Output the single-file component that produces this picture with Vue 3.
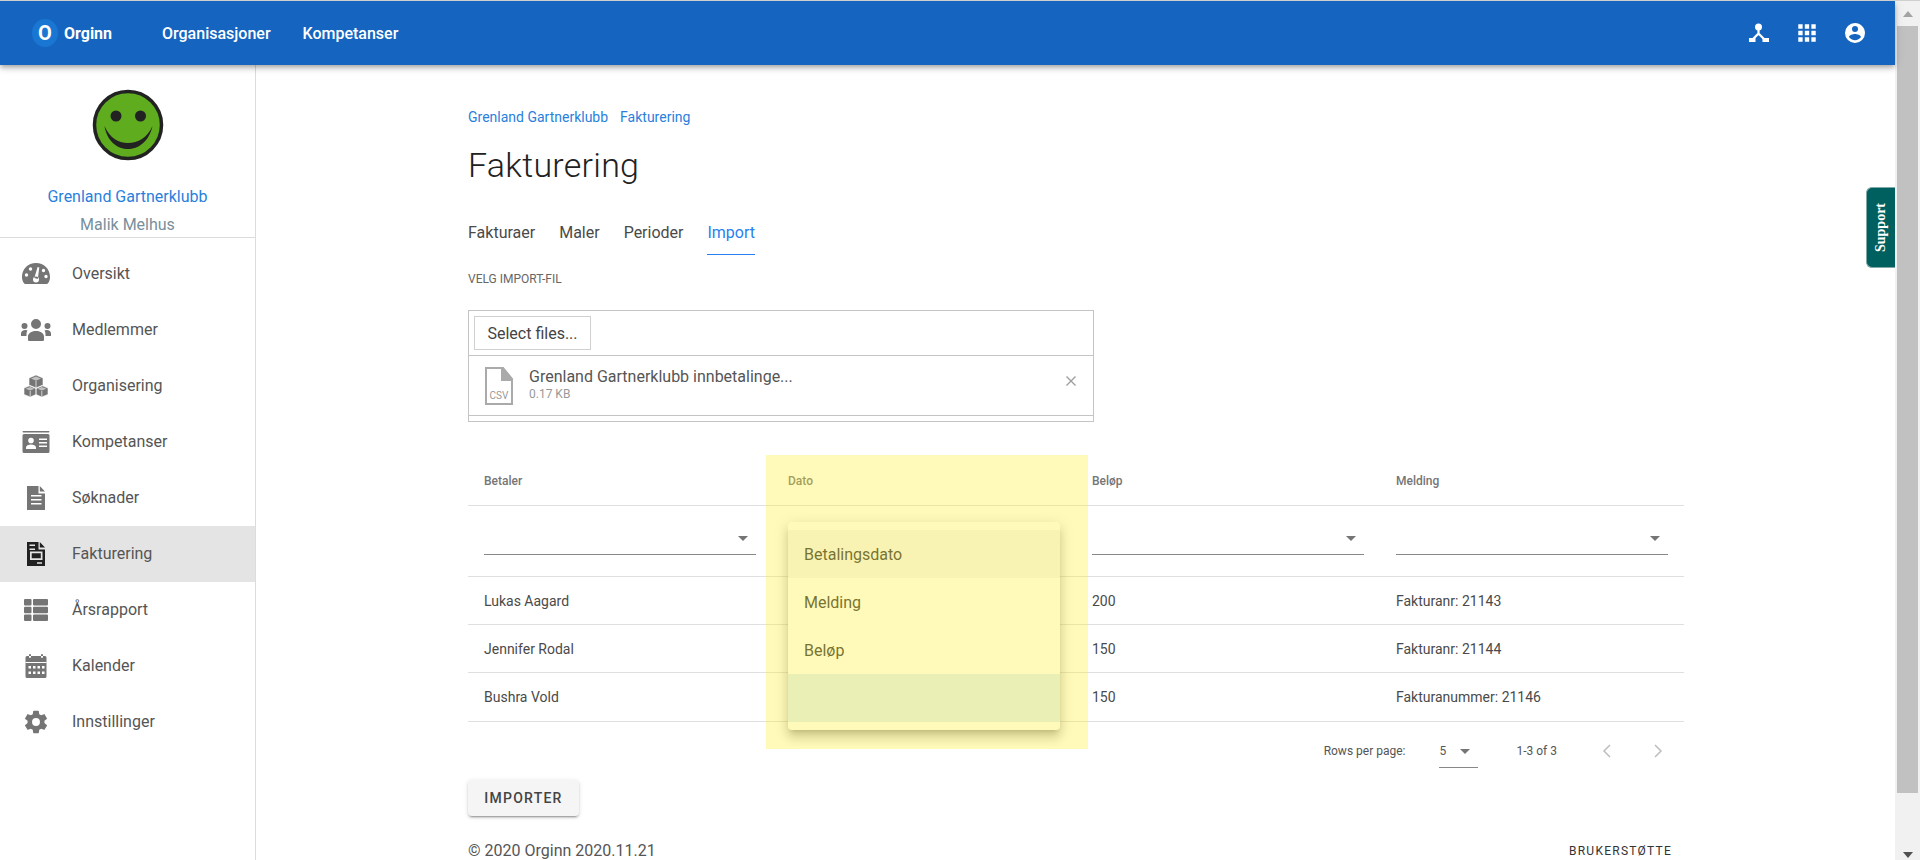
<script setup>
const circle = (cx, cy, r) => `M${cx - r} ${cy}a${r} ${r} 0 1 0 ${2 * r} 0a${r} ${r} 0 1 0 ${-2 * r} 0Z`
const rect = (x, y, w, h, r = 0) =>
  r
    ? `M${x + r} ${y}h${w - 2 * r}a${r} ${r} 0 0 1 ${r} ${r}v${h - 2 * r}a${r} ${r} 0 0 1 ${-r} ${r}h${-(w - 2 * r)}a${r} ${r} 0 0 1 ${-r} ${-r}v${-(h - 2 * r)}a${r} ${r} 0 0 1 ${r} ${-r}Z`
    : `M${x} ${y}h${w}v${h}h${-w}Z`

const navItems = [
  {
    label: 'Oversikt',
    shapes: [
      { k: 'f', d: 'M16 5C8 5 2 11 2 19c0 2 .5 4 1.5 5.5.5 1 1.5 1.5 2.5 1.5h20c1 0 2-.5 2.5-1.5 1-1.500 1.500-3.500 1.500-5.500C30 11 24 5 16 5Z' },
      { k: 'w', d: circle(16, 21.5, 3) + 'M14.3 20 17.600 9 19.300 9.500 17.800 21Z' + circle(10.500, 11, 1.700) + circle(6.500, 17, 1.700) + circle(23.500, 12.500, 1.700) + circle(26, 18.500, 1.700) },
    ],
  },
  {
    label: 'Medlemmer',
    shapes: [
      {
        k: 'f',
        d:
          circle(16, 10, 5) +
          circle(4.500, 12, 3) +
          circle(27.500, 12, 3) +
          'M8 25.500v-3C8 19.500 11 17 16 17s8 2.500 8 5.500v3c0 1-.6 1.500-1.500 1.500h-13C8.600 27 8 26.500 8 25.500Z' +
          'M1 22v-2.500C1 17.500 3 16 5 16c1 0 2 .3 2.500.5-.7 1-1 2.500-1 3.500v2Z' +
          'M31 22v-2.500c0-2-2-3.500-4-3.500-1 0-2 .3-2.500.5.7 1 1 2.500 1 3.500v2Z',
      },
    ],
  },
  {
    label: 'Organisering',
    shapes: [
      {
        k: 'c',
        d:
          'M16 5 23 8v7.500L16 18.500 9 15.500V8Z' +
          'M10.200 15.500 16 18v6.500L10.200 27 4 24.500V18Z' +
          'M21.800 15.500 28 18v6.500L21.800 27 16 24.500V18Z',
      },
      {
        k: 't',
        d:
          'M16 6.500 21 8.600 16 10.700 11 8.600Z' +
          'M10.200 17 14.500 18.800 10.200 20.600 5.500 18.800Z' +
          'M21.800 17 26.500 18.800 21.800 20.600 17.500 18.800Z',
      },
      { k: 'l', d: 'M16 11V17.500M10.200 21V26.500M21.800 21V26.500' },
    ],
  },
  {
    label: 'Kompetanser',
    shapes: [
      { k: 'f', d: rect(2.5, 5, 27, 1.6, 0.8) + rect(2.5, 8, 27, 19, 1.5) },
      {
        k: 'w',
        d:
          circle(11, 14.500, 2.800) +
          'M6 23v-1.500c0-2 2.500-3 5-3s5 1 5 3V23Z' +
          rect(19, 12.500, 8, 1.500) +
          rect(19, 16, 8, 1.500) +
          rect(19, 19.500, 8, 1.500),
      },
    ],
  },
  {
    label: 'Søknader',
    shapes: [
      { k: 'f', d: 'M7 4h11.500v7.500H25V28H7ZM19.800 4 25 9.500h-5.200Z' },
      { k: 'w', d: rect(11, 13, 10.500, 1.600) + rect(11, 17, 10.500, 1.600) + rect(11, 21, 10.500, 1.600) },
    ],
  },
  {
    label: 'Fakturering',
    active: true,
    shapes: [
      { k: 'f', d: 'M7 4h11.500v7.500H25V28H7ZM19.800 4 25 9.500h-5.200Z' },
      {
        k: 'w',
        d: rect(9.5, 6.5, 5.5, 1.5) + rect(9.5, 10.5, 5.5, 1.5) + rect(17, 24.200, 5, 1.500) + 'M10 13.500h12.500v8.500H10ZM11.700 15.200v5.100h9.100v-5.100Z',
      },
    ],
  },
  {
    label: 'Årsrapport',
    shapes: [
      {
        k: 'f',
        d:
          rect(4, 5, 7.5, 6.500, 1) +
          rect(13, 5, 15, 6.500, 1) +
          rect(4, 12.750, 7.5, 6.500, 1) +
          rect(13, 12.750, 15, 6.500, 1) +
          rect(4, 20.500, 7.5, 6.500, 1) +
          rect(13, 20.500, 15, 6.500, 1),
      },
    ],
  },
  {
    label: 'Kalender',
    shapes: [
      { k: 'f', d: rect(9, 4, 2, 4, 1) + rect(21, 4, 2, 4, 1) + rect(5.500, 6, 21, 22, 1.500) },
      {
        k: 'w',
        d:
          rect(5.5, 12, 21, 1) +
          [8.5, 13, 17.5, 22].map((x) => rect(x, 16, 2.500, 2.500) + rect(x, 21.500, 2.500, 2.500)).join(''),
      },
    ],
  },
  {
    label: 'Innstillinger',
    shapes: [
      {
        k: 'f',
        t: 'translate(2.44 2.44) scale(1.13)',
        d: 'M12,15.5A3.5,3.5 0 0,1 8.5,12A3.5,3.5 0 0,1 12,8.5A3.5,3.5 0 0,1 15.5,12A3.5,3.5 0 0,1 12,15.5M19.43,12.97C19.47,12.65 19.5,12.33 19.5,12C19.5,11.67 19.47,11.34 19.43,11L21.54,9.37C21.73,9.22 21.78,8.95 21.66,8.73L19.66,5.27C19.54,5.05 19.27,4.96 19.05,5.05L16.56,6.05C16.04,5.66 15.5,5.32 14.87,5.07L14.5,2.42C14.46,2.18 14.25,2 14,2H10C9.75,2 9.54,2.18 9.5,2.42L9.13,5.07C8.5,5.32 7.96,5.66 7.44,6.05L4.95,5.05C4.73,4.96 4.46,5.05 4.34,5.27L2.34,8.73C2.21,8.95 2.27,9.22 2.46,9.37L4.57,11C4.53,11.34 4.5,11.67 4.5,12C4.5,12.33 4.53,12.65 4.57,12.97L2.46,14.63C2.27,14.78 2.21,15.05 2.34,15.27L4.34,18.73C4.46,18.95 4.73,19.03 4.95,18.95L7.44,17.94C7.96,18.34 8.5,18.68 9.13,18.93L9.5,21.58C9.54,21.82 9.75,22 10,22H14C14.25,22 14.46,21.82 14.5,21.58L14.87,18.93C15.5,18.67 16.04,18.34 16.56,17.94L19.05,18.95C19.27,19.03 19.54,18.95 19.66,18.73L21.66,15.27C21.78,15.05 21.73,14.78 21.54,14.63L19.43,12.97Z',
      },
    ],
  },
]

const columns = ['Betaler', 'Dato', 'Beløp', 'Melding']
const rows = [
  { payer: 'Lukas Aagard', amount: '200', note: 'Fakturanr: 21143' },
  { payer: 'Jennifer Rodal', amount: '150', note: 'Fakturanr: 21144' },
  { payer: 'Bushra Vold', amount: '150', note: 'Fakturanummer: 21146' },
]
const options = ['Betalingsdato', 'Melding', 'Beløp', '']
const tabs = ['Fakturaer', 'Maler', 'Perioder', 'Import']
</script>

<template>
  <div class="window">
    <div class="page">
      <header class="topbar">
        <div class="brand">
          <span class="brand-mark">O</span>
          <span class="brand-name">Orginn</span>
        </div>
        <nav class="topnav">
          <a>Organisasjoner</a>
          <a>Kompetanser</a>
        </nav>
        <div class="top-icons">
          <svg viewBox="0 0 24 24" width="24" height="24">
            <circle cx="11.500" cy="6" r="3.500" fill="#fff" />
            <path d="M11.500 8v4.500L6 18M11.500 12.500L17 18" fill="none" stroke="#fff" stroke-width="2.200" />
            <path d="M2 17h6.500v4H2ZM15.500 17H22v4h-6.500Z" fill="#fff" />
          </svg>
          <svg viewBox="1 1 22 22" width="24" height="24">
            <path fill="#fff" d="M16,20H20V16H16M16,14H20V10H16M10,8H14V4H10M16,8H20V4H16M10,14H14V10H10M4,14H8V10H4M4,20H8V16H4M10,20H14V16H10M4,8H8V4H4V8Z" />
          </svg>
          <svg viewBox="0 0 24 24" width="24" height="24">
            <path fill="#fff" d="M12,19.2C9.5,19.2 7.29,17.92 6,16C6.03,14 10,12.9 12,12.9C14,12.9 17.97,14 18,16C16.71,17.92 14.5,19.2 12,19.2M12,5A3,3 0 0,1 15,8A3,3 0 0,1 12,11A3,3 0 0,1 9,8A3,3 0 0,1 12,5M12,2A10,10 0 0,0 2,12A10,10 0 0,0 12,22A10,10 0 0,0 22,12C22,6.47 17.5,2 12,2Z" />
          </svg>
        </div>
      </header>

      <div class="main">
        <aside class="sidebar">
          <div class="profile">
            <svg class="avatar" viewBox="0 0 72 72" width="72" height="72">
              <circle cx="36" cy="36" r="33.500" fill="#5fad1f" stroke="#222" stroke-width="3.500" />
              <circle cx="24" cy="27" r="5.500" fill="#222" />
              <circle cx="48.500" cy="27" r="5.500" fill="#222" />
              <path fill="#222" d="M12.500 37C15 53 26 60 36 60S57 53 60.500 37C55 49 46 54 36 54S18 49 12.500 37Z" />
            </svg>
            <div class="org">Grenland Gartnerklubb</div>
            <div class="user">Malik Melhus</div>
          </div>
          <ul class="sidenav">
            <li v-for="item in navItems" :key="item.label" :class="{ active: item.active }">
              <svg class="nav-icon" viewBox="0 0 32 32" width="32" height="32">
                <path v-for="(s, i) in item.shapes" :key="i" :class="s.k" :d="s.d" :transform="s.t" fill-rule="evenodd" />
              </svg>
              <span class="nav-label">{{ item.label }}</span>
            </li>
          </ul>
        </aside>

        <main class="content">
          <div class="crumbs">
            <a>Grenland Gartnerklubb</a>
            <a>Fakturering</a>
          </div>
          <h1 class="title">Fakturering</h1>
          <div class="tabs">
            <a v-for="tab in tabs" :key="tab" :class="{ current: tab === 'Import' }">{{ tab }}</a>
          </div>
          <div class="label">VELG IMPORT-FIL</div>

          <section class="upload">
            <div class="upload-head">
              <button class="select-files" type="button">Select files...</button>
            </div>
            <div class="upload-file">
              <svg class="file-icon" viewBox="0 0 28 38" width="28" height="38">
                <path d="M1 1h17l9 11v25H1Z" fill="#fff" stroke="#aaa" stroke-width="2" />
                <path d="M16 0h2l10 12v2H16Z" fill="#aaa" />
                <text x="14" y="32" text-anchor="middle" font-size="10" fill="#999" font-family="Roboto, sans-serif">CSV</text>
              </svg>
              <div class="file-text">
                <div class="file-name">Grenland Gartnerklubb innbetalinge...</div>
                <div class="file-size">0.17 KB</div>
              </div>
              <svg class="file-close" viewBox="0 0 12 12" width="12" height="12">
                <path d="M1.500 1.500l9 9M10.500 1.500l-9 9" stroke="#9e9e9e" stroke-width="1.400" fill="none" />
              </svg>
            </div>
            <div class="upload-foot"></div>
          </section>

          <section class="table-wrap">
            <table class="grid">
              <thead>
                <tr>
                  <th v-for="c in columns" :key="c">{{ c }}</th>
                </tr>
              </thead>
              <tbody>
                <tr class="filters">
                  <td v-for="c in columns" :key="c">
                    <div class="select"><i class="caret"></i></div>
                  </td>
                </tr>
                <tr v-for="r in rows" :key="r.payer">
                  <td>{{ r.payer }}</td>
                  <td></td>
                  <td>{{ r.amount }}</td>
                  <td>{{ r.note }}</td>
                </tr>
              </tbody>
            </table>

            <div class="pager">
              <span class="pager-label">Rows per page:</span>
              <div class="pager-select"><span>5</span><i class="caret"></i></div>
              <span class="pager-range">1-3 of 3</span>
              <svg viewBox="0 0 24 24" width="24" height="24" class="pager-prev">
                <path d="M15 6l-6 6 6 6" fill="none" stroke="#bdbdbd" stroke-width="1.500" />
              </svg>
              <svg viewBox="0 0 24 24" width="24" height="24" class="pager-next">
                <path d="M9 6l6 6-6 6" fill="none" stroke="#bdbdbd" stroke-width="1.500" />
              </svg>
            </div>

            <ul class="menu">
              <li v-for="(o, i) in options" :key="i" :class="{ hover: i === 0, picked: i === 3 }">{{ o }}</li>
            </ul>
            <div class="highlight"></div>
          </section>

          <button class="import" type="button">IMPORTER</button>

          <footer class="foot">
            <span>© 2020 Orginn 2020.11.21</span>
            <a>BRUKERSTØTTE</a>
          </footer>
        </main>
      </div>
      <a class="support">Support</a>
    </div>

    <div class="scrollbar">
      <div class="sb-btn"><i class="up"></i></div>
      <div class="sb-thumb"></div>
      <div class="sb-btn bottom"><i class="down"></i></div>
    </div>
  </div>
</template>

<style>
html,
body {
  margin: 0;
  overflow: hidden;
  background: #fff;
}
</style>

<style scoped>
.window {
  display: flex;
  height: 860px;
  box-sizing: border-box;
  border-top: 1px solid #cfcfcf;
  font-family: Roboto, "Liberation Sans", sans-serif;
  color: #212121;
  overflow: hidden;
}
.page {
  position: relative;
  flex: 1;
  min-width: 0;
  display: flex;
  flex-direction: column;
}
.topbar {
  position: relative;
  z-index: 3;
  flex: none;
  height: 64px;
  display: flex;
  align-items: center;
  padding: 0 28px 0 32px;
  background: #1565c0;
  color: #fff;
  box-shadow: 0 2px 4px -1px rgba(0, 0, 0, 0.2), 0 4px 5px 0 rgba(0, 0, 0, 0.14), 0 1px 10px 0 rgba(0, 0, 0, 0.12);
}
.brand {
  display: flex;
  align-items: center;
  gap: 6px;
  width: 130px;
}
.brand-mark {
  width: 26px;
  height: 28px;
  border-radius: 50%;
  background: #1976d2;
  display: flex;
  align-items: center;
  justify-content: center;
  font-size: 20px;
  font-weight: 700;
}
.brand-name {
  font-size: 16px;
  font-weight: 700;
}
.topnav {
  display: flex;
  gap: 32px;
  font-size: 16px;
  font-weight: 500;
}
.top-icons {
  margin-left: auto;
  display: flex;
  gap: 24px;
}
.main {
  flex: 1;
  min-height: 0;
  display: flex;
}
.sidebar {
  flex: none;
  width: 256px;
  box-sizing: border-box;
  border-right: 1px solid #dcdcdc;
}
.profile {
  display: flex;
  flex-direction: column;
  align-items: center;
  padding: 24px 0 0;
  border-bottom: 1px solid #dcdcdc;
  font-size: 16px;
  line-height: 24px;
}
.avatar {
  display: block;
}
.org {
  margin-top: 24px;
  color: #2a7fdc;
}
.user {
  margin-top: 4px;
  color: #78909c;
}
.sidenav {
  list-style: none;
  margin: 0;
  padding: 8px 0 0;
}
.sidenav li {
  --gap: #fff;
  height: 56px;
  display: flex;
  align-items: center;
  padding-left: 20px;
  font-size: 16px;
  color: #555;
}
.nav-icon {
  flex: none;
  margin-right: 20px;
  color: #757575;
}
.nav-label {
  padding-bottom: 2px;
}
.sidenav li.active {
  --gap: #e4e4e4;
  background: #e4e4e4;
}
.sidenav li.active .nav-icon {
  color: #212121;
}
.f {
  fill: currentColor;
}
.w {
  fill: var(--gap);
}
.c {
  fill: currentColor;
  stroke: var(--gap);
  stroke-width: 0.6;
}
.t {
  fill: var(--gap);
  opacity: 0.55;
}
.l {
  fill: none;
  stroke: var(--gap);
  stroke-width: 0.7;
}
.content {
  flex: none;
  width: 1216px;
  margin-left: 212px;
  padding-top: 42px;
}
.crumbs {
  display: flex;
  gap: 12px;
  font-size: 14px;
  line-height: 20px;
  color: #2a7fdc;
}
.title {
  margin: 18px 0 0;
  font-size: 34px;
  line-height: 40px;
  font-weight: 300;
  letter-spacing: 0.25px;
  color: #212121;
}
.tabs {
  display: flex;
  gap: 24px;
  margin-top: 36px;
  font-size: 16px;
  line-height: 24px;
  color: #4a4a4a;
}
.tabs a {
  padding-bottom: 9px;
  border-bottom: 1px solid transparent;
}
.tabs a.current {
  color: #2a7fee;
  border-bottom-color: #2a7fee;
}
.label {
  margin-top: 16px;
  font-size: 12px;
  line-height: 16px;
  color: #666;
}
.upload {
  margin-top: 23px;
  width: 626px;
  box-sizing: border-box;
  border: 1px solid #c4c4c4;
}
.upload-head {
  height: 45px;
  box-sizing: border-box;
  padding: 5px 0 0 5px;
  border-bottom: 1px solid #c4c4c4;
}
.select-files {
  display: block;
  width: 117px;
  height: 34px;
  padding: 0;
  background: #fff;
  border: 1px solid #d0d0d0;
  font: 400 16px Roboto, sans-serif;
  color: #444;
}
.upload-file {
  height: 60px;
  box-sizing: border-box;
  display: flex;
  align-items: flex-start;
  padding: 11px 0 0 16px;
  border-bottom: 1px solid #c4c4c4;
}
.file-text {
  margin-left: 16px;
}
.file-name {
  font-size: 16px;
  line-height: 20px;
  color: #555;
}
.file-size {
  font-size: 12px;
  line-height: 14px;
  color: #999;
}
.file-close {
  margin: 8px 16px 0 auto;
}
.upload-foot {
  height: 5px;
}
.table-wrap {
  position: relative;
  margin-top: 35px;
}
.grid {
  width: 100%;
  table-layout: fixed;
  border-collapse: separate;
  border-spacing: 0;
}
.grid th,
.grid td {
  box-sizing: border-box;
  height: 48px;
  padding: 0 16px;
  text-align: left;
  border-bottom: 1px solid #e0e0e0;
  font-size: 14px;
  font-weight: 400;
  color: #4a4a4a;
}
.grid th {
  height: 49px;
  font-size: 12px;
  font-weight: 500;
  color: #757575;
}
.grid tr:last-child td {
  height: 49px;
}
.grid .filters td {
  height: 71px;
  vertical-align: top;
  padding-top: 16px;
}
.select {
  height: 33px;
  box-sizing: border-box;
  display: flex;
  align-items: center;
  justify-content: flex-end;
  padding-right: 8px;
  border-bottom: 1px solid #888;
}
.caret {
  display: block;
  width: 0;
  height: 0;
  border-left: 5px solid transparent;
  border-right: 5px solid transparent;
  border-top: 5px solid #757575;
}
.pager {
  height: 58px;
  display: flex;
  align-items: center;
  justify-content: flex-end;
  padding-right: 14px;
  font-size: 12px;
  color: #555;
}
.pager-select {
  width: 39px;
  box-sizing: border-box;
  margin-left: 34px;
  padding: 7px 0 6px;
  line-height: 20px;
  display: flex;
  align-items: center;
  justify-content: space-between;
  padding-right: 8px;
  border-bottom: 1px solid #888;
}
.pager-range {
  margin-left: 38px;
}
.pager-prev {
  margin-left: 38px;
}
.pager-next {
  margin-left: 27px;
}
.menu {
  position: absolute;
  left: 320px;
  top: 65px;
  width: 272px;
  box-sizing: border-box;
  margin: 0;
  padding: 8px 0;
  list-style: none;
  background: #fff;
  border-radius: 4px;
  box-shadow: 0 5px 5px -3px rgba(0, 0, 0, 0.2), 0 8px 10px 1px rgba(0, 0, 0, 0.14), 0 3px 14px 2px rgba(0, 0, 0, 0.12);
}
.menu li {
  height: 48px;
  line-height: 50px;
  padding: 0 16px;
  font-size: 16px;
  color: #333;
}
.menu li.hover {
  background: rgba(0, 0, 0, 0.04);
}
.menu li.picked {
  background: rgba(25, 140, 210, 0.14);
}
.highlight {
  position: absolute;
  left: 298px;
  top: -2px;
  width: 322px;
  height: 294px;
  background: rgba(255, 240, 50, 0.34);
  pointer-events: none;
}
.import {
  display: block;
  width: 111px;
  height: 36px;
  padding: 0;
  border: 0;
  border-radius: 4px;
  background: #f5f5f5;
  font: 500 14px Roboto, sans-serif;
  letter-spacing: 1.25px;
  color: #444;
  box-shadow: 0 3px 1px -2px rgba(0, 0, 0, 0.2), 0 2px 2px 0 rgba(0, 0, 0, 0.14), 0 1px 5px 0 rgba(0, 0, 0, 0.12);
}
.foot {
  margin-top: 23px;
  display: flex;
  justify-content: space-between;
  align-items: center;
  padding-right: 12px;
  font-size: 16px;
  line-height: 24px;
  color: #555;
}
.foot a {
  font-size: 12px;
  font-weight: 400;
  letter-spacing: 1.25px;
  color: #333;
}
.support {
  position: absolute;
  right: 0;
  top: 186px;
  width: 29px;
  height: 81px;
  box-sizing: border-box;
  display: flex;
  align-items: center;
  justify-content: center;
  writing-mode: vertical-rl;
  transform: rotate(180deg);
  background: #005f5f;
  border: 1px solid #7fa9a9;
  border-left: 0;
  border-radius: 0 6px 6px 0;
  font: 700 14px "Liberation Serif", serif;
  color: #fff;
  z-index: 2;
}
.scrollbar {
  flex: none;
  width: 25px;
  display: flex;
  flex-direction: column;
  align-items: center;
  background: #f1f1f1;
}
.sb-btn {
  flex: none;
  height: 25px;
  display: flex;
  justify-content: center;
  padding-top: 10px;
  box-sizing: border-box;
}
.sb-btn.bottom {
  margin-top: auto;
  height: 14px;
  padding-top: 6px;
}
.sb-btn i {
  display: block;
  width: 0;
  height: 0;
  border-left: 5.5px solid transparent;
  border-right: 5.5px solid transparent;
}
.up {
  border-bottom: 6px solid #a3a3a3;
}
.down {
  border-top: 6px solid #505050;
}
.sb-thumb {
  flex: none;
  width: 21px;
  height: 767px;
  background: #c1c1c1;
}
</style>
